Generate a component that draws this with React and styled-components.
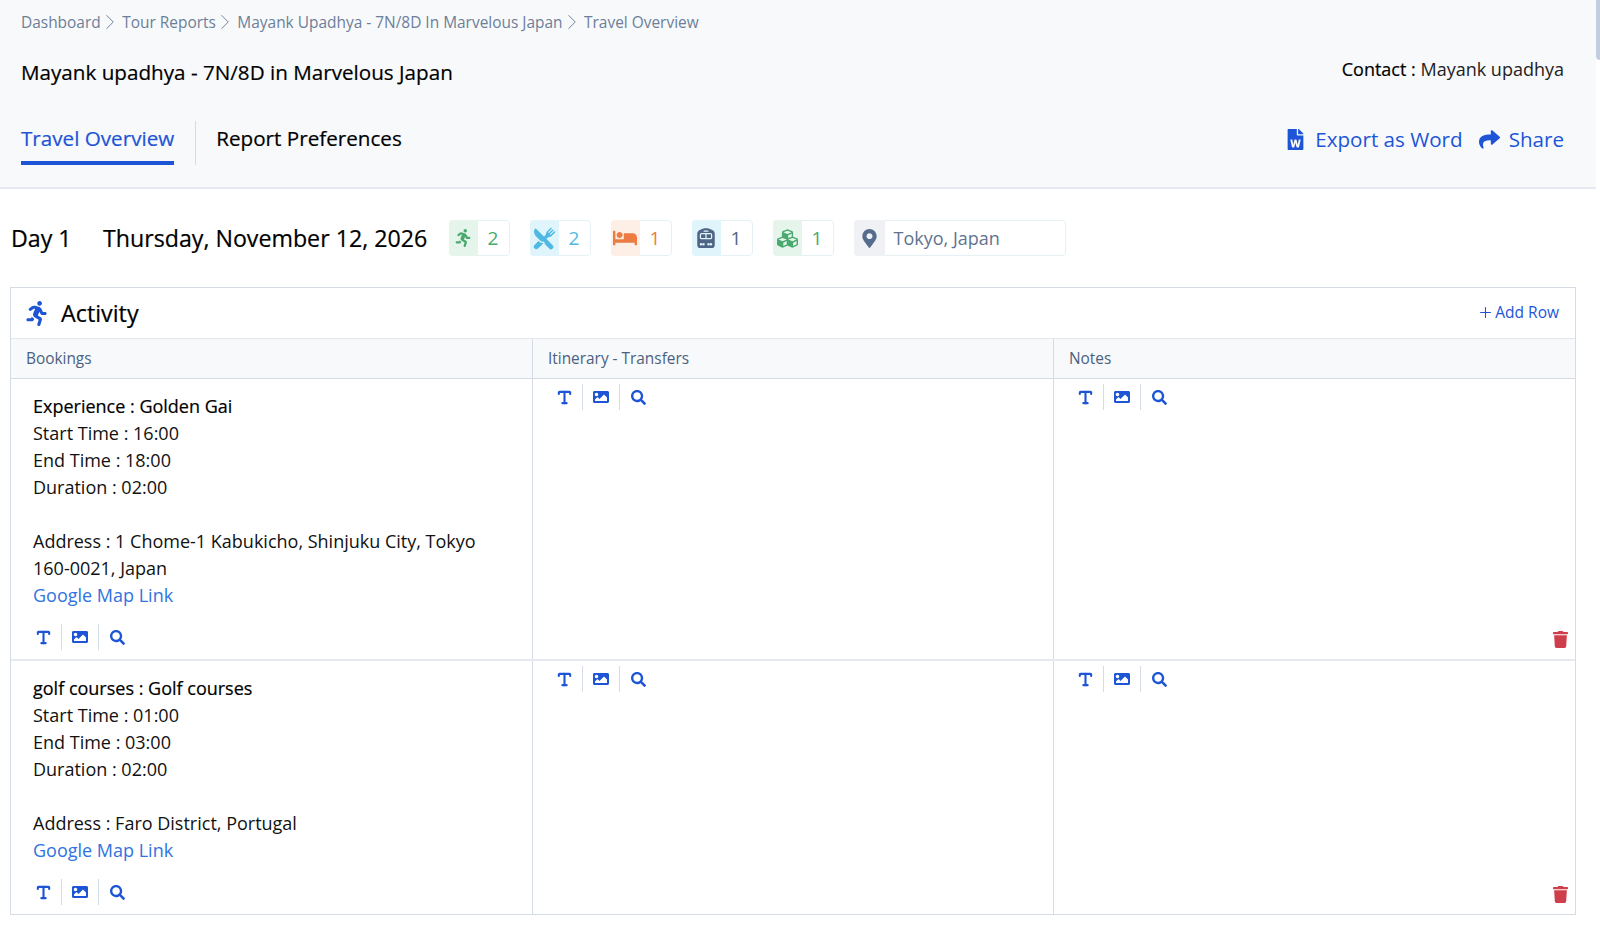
import styled, { createGlobalStyle } from 'styled-components';
import { FaRunning, FaBed, FaCubes, FaMapMarkerAlt, FaFileWord, FaShare, FaImage, FaTrash, FaSearch } from 'react-icons/fa';
import { IoRestaurant } from 'react-icons/io5';
import { BsTrainFrontFill } from 'react-icons/bs';
import { Type, Plus, ChevronRight } from 'lucide-react';

const BLUE = '#1d55d6';

const GlobalStyle = createGlobalStyle`
  html, body { margin: 0; padding: 0; background: #fff; overflow: hidden; }
  body { font-family: 'Open Sans', 'Liberation Sans', sans-serif; color: #000; }
`;

const crumbs = ['Dashboard', 'Tour Reports', 'Mayank Upadhya - 7N/8D In Marvelous Japan', 'Travel Overview'];

const badges = [
  { icon: <FaRunning size={18} />, count: 2, bg: '#e5f5ec', color: '#49a96e' },
  { icon: <IoRestaurant size={23} />, count: 2, bg: '#e0f4fb', color: '#4fb9e3' },
  { icon: <FaBed size={24} />, count: 1, bg: '#fdeee6', color: '#ec7c41' },
  { icon: <BsTrainFrontFill size={20} />, count: 1, bg: '#e0f4fb', color: '#4f6585' },
  { icon: <FaCubes size={21} />, count: 1, bg: '#e5f5ec', color: '#49a96e' },
];

const bookings = [
  {
    title: 'Experience : Golden Gai',
    lines: ['Start Time : 16:00', 'End Time : 18:00', 'Duration : 02:00'],
    address: ['Address : 1 Chome-1 Kabukicho, Shinjuku City, Tokyo', '160-0021, Japan'],
    height: 280,
  },
  {
    title: 'golf courses : Golf courses',
    lines: ['Start Time : 01:00', 'End Time : 03:00', 'Duration : 02:00'],
    address: ['Address : Faro District, Portugal'],
    height: 255,
  },
];

function Tools({ $inset }) {
  return (
    <Toolbar $inset={$inset}>
      <Tool><Type size={17} strokeWidth={3} /></Tool>
      <Tool><FaImage size={16} /></Tool>
      <Tool><FaSearch size={15} /></Tool>
    </Toolbar>
  );
}

export default function App() {
  return (
    <>
      <GlobalStyle />
      <Page>
        <Main>
          <Header>
            <Breadcrumbs>
              {crumbs.map((crumb, i) => (
                <Crumb key={crumb}>
                  {crumb}
                  {i < crumbs.length - 1 && <ChevronRight size={26} strokeWidth={0.9} />}
                </Crumb>
              ))}
            </Breadcrumbs>
            <TitleRow>
              <Title>Mayank upadhya - 7N/8D in Marvelous Japan</Title>
              <Contact><b>Contact :</b> Mayank upadhya</Contact>
            </TitleRow>
            <TabRow>
              <Tabs>
                <Tab $active>Travel Overview</Tab>
                <TabDivider />
                <Tab>Report Preferences</Tab>
              </Tabs>
              <Actions>
                <Action><FaFileWord size={21} />Export as Word</Action>
                <Action><FaShare size={21} />Share</Action>
              </Actions>
            </TabRow>
          </Header>

          <DayRow>
            <DayLabel>Day 1</DayLabel>
            <DayDate>Thursday, November 12, 2026</DayDate>
            <Badges>
              {badges.map((b, i) => (
                <Badge key={i}>
                  <BadgeIcon $bg={b.bg} $color={b.color}>{b.icon}</BadgeIcon>
                  <BadgeCount $color={b.color}>{b.count}</BadgeCount>
                </Badge>
              ))}
              <Location>
                <LocationIcon><FaMapMarkerAlt size={19} /></LocationIcon>
                <LocationText>Tokyo, Japan</LocationText>
              </Location>
            </Badges>
          </DayRow>

          <Table>
            <TableTitle>
              <TableName><FaRunning size={25} color={BLUE} />Activity</TableName>
              <AddRow><Plus size={17} strokeWidth={1.5} />Add Row</AddRow>
            </TableTitle>
            <HeadRow>
              <HeadCell>Bookings</HeadCell>
              <HeadCell>Itinerary - Transfers</HeadCell>
              <HeadCell>Notes</HeadCell>
            </HeadRow>
            {bookings.map((b) => (
              <Row key={b.title} $height={b.height}>
                <BookingCell>
                  <div>
                    <BookingTitle>{b.title}</BookingTitle>
                    {b.lines.map((l) => <div key={l}>{l}</div>)}
                    <Spacer />
                    {b.address.map((l) => <div key={l}>{l}</div>)}
                    <MapLink>Google Map Link</MapLink>
                  </div>
                  <Tools $inset />
                </BookingCell>
                <Cell><Tools /></Cell>
                <Cell>
                  <Tools />
                  <Delete><FaTrash size={17} /></Delete>
                </Cell>
              </Row>
            ))}
          </Table>
        </Main>
        <Track><Thumb /></Track>
      </Page>
    </>
  );
}

const Page = styled.div`
  display: flex;
  width: 1600px;
  height: 951px;
`;

const Main = styled.div`
  width: 1596px;
`;

const Track = styled.div`
  width: 4px;
`;

const Thumb = styled.div`
  height: 60px;
  background: #c3cddd;
  border-bottom-left-radius: 4px;
`;

const Header = styled.header`
  height: 189px;
  box-sizing: border-box;
  padding: 12px 32px 0 21px;
  background: #f8f9fb;
  border-bottom: 2px solid #e6e9f0;
`;

const Breadcrumbs = styled.nav`
  display: flex;
  align-items: center;
  height: 20px;
  gap: 6.5px;
`;

const Crumb = styled.span`
  display: flex;
  align-items: center;
  font-size: 15.45px;
  color: #6c7f99;
  svg { margin: 0 -7px 0 -4px; }
`;

const TitleRow = styled.div`
  display: flex;
  justify-content: space-between;
  align-items: flex-start;
  margin-top: 23px;
  height: 34px;
`;

const Title = styled.h1`
  margin: 0;
  font-size: 20.65px;
  line-height: 34px;
  font-weight: 500;
  -webkit-text-stroke: 0.2px #000;
`;

const Contact = styled.div`
  margin-top: 1px;
  font-size: 18px;
  line-height: 27px;
  color: #222;
  b { font-weight: 500; color: #000; -webkit-text-stroke: 0.2px #000; }
`;

const TabRow = styled.div`
  display: flex;
  justify-content: space-between;
  margin-top: 32px;
`;

const Tabs = styled.div`
  display: flex;
`;

const Tab = styled.div`
  height: 44px;
  box-sizing: border-box;
  font-size: 20.65px;
  line-height: 34px;
  font-weight: 500;
  -webkit-text-stroke: 0.2px ${(p) => (p.$active ? BLUE : '#000')};
  color: ${(p) => (p.$active ? BLUE : '#000')};
  border-bottom: 4px solid ${(p) => (p.$active ? BLUE : 'transparent')};
`;

const TabDivider = styled.div`
  width: 1px;
  height: 44px;
  margin: 0 20.5px;
  background: #d5dbe5;
`;

const Actions = styled.div`
  display: flex;
  gap: 16px;
  height: 36px;
`;

const Action = styled.div`
  display: flex;
  align-items: center;
  gap: 9px;
  font-size: 20.6px;
  color: ${BLUE};
`;

const DayRow = styled.div`
  display: flex;
  align-items: center;
  height: 36px;
  margin-top: 31px;
  padding-left: 11px;
`;

const DayLabel = styled.div`
  font-size: 23.2px;
  font-weight: 500;
  width: 92px;
  -webkit-text-stroke: 0.2px #000;
`;

const DayDate = styled(DayLabel)`
  width: 345.5px;
`;

const Badges = styled.div`
  display: flex;
  gap: 20px;
`;

const Badge = styled.div`
  display: flex;
  width: 61px;
  height: 36px;
  box-sizing: border-box;
  border: 1px solid #e6f1f6;
  border-radius: 4px;
`;

const BadgeIcon = styled.div`
  display: flex;
  align-items: center;
  justify-content: center;
  width: 29px;
  margin: -1px 0 -1px -1px;
  border-radius: 4px 0 0 4px;
  background: ${(p) => p.$bg};
  color: ${(p) => p.$color};
`;

const BadgeCount = styled.div`
  flex: 1;
  text-align: center;
  font-size: 19px;
  line-height: 34px;
  color: ${(p) => p.$color};
`;

const Location = styled(Badge)`
  width: 212px;
`;

const LocationIcon = styled(BadgeIcon).attrs({ $bg: '#f0f1f5', $color: '#566c8c' })`
  width: 31px;
`;

const LocationText = styled.div`
  padding-left: 9px;
  font-size: 18px;
  line-height: 34px;
  color: #5f7390;
`;

const Table = styled.section`
  width: 1566px;
  margin: 31px 0 0 10px;
  box-sizing: border-box;
  border: 1px solid #d5dce6;
`;

const TableTitle = styled.div`
  display: flex;
  align-items: center;
  justify-content: space-between;
  height: 50px;
  padding: 0 16px 0 13px;
`;

const TableName = styled.div`
  display: flex;
  align-items: center;
  gap: 12px;
  font-size: 23.3px;
  font-weight: 500;
  -webkit-text-stroke: 0.2px #000;
`;

const AddRow = styled.div`
  display: flex;
  align-items: center;
  gap: 1px;
  margin-bottom: 2px;
  font-size: 15.5px;
  font-weight: 500;
  color: ${BLUE};
`;

const HeadRow = styled.div`
  display: grid;
  grid-template-columns: 521px 521px 1fr;
  height: 41px;
  box-sizing: border-box;
  background: #f8f9fb;
  border-top: 1px solid #e2e6ed;
  border-bottom: 1px solid #d5dce6;
`;

const HeadCell = styled.div`
  padding-left: 15px;
  font-size: 15.4px;
  line-height: 39px;
  font-weight: 500;
  color: #4a617f;
  & + & { border-left: 1px solid #d5dce6; }
`;

const Row = styled.div`
  display: grid;
  grid-template-columns: 521px 521px 1fr;
  height: ${(p) => p.$height}px;
  box-sizing: border-box;
  & + & { border-top: 2px solid #e6e9f0; }
`;

const Cell = styled.div`
  display: flex;
  position: relative;
  padding: 5px 0 0 13px;
  border-left: 1px solid #d5dce6;
`;

const BookingCell = styled.div`
  display: flex;
  flex-direction: column;
  justify-content: space-between;
  padding: 14px 30px 9px 22px;
  font-size: 18px;
  line-height: 27px;
  color: #111;
`;

const BookingTitle = styled.div`
  font-weight: 500;
  color: #000;
  -webkit-text-stroke: 0.2px #000;
`;

const Spacer = styled.div`
  height: 27px;
`;

const MapLink = styled.div`
  color: #2f74e0;
`;

const Toolbar = styled.div`
  display: flex;
  height: 26px;
  margin-left: ${(p) => (p.$inset ? '-8px' : '0')};
`;

const Tool = styled.div`
  display: flex;
  align-items: center;
  justify-content: center;
  width: 36px;
  color: ${BLUE};
  & + & { border-left: 1px solid #d5dce6; }
`;

const Delete = styled.div`
  position: absolute;
  right: 6px;
  bottom: 6px;
  color: #cf3f4b;
`;
